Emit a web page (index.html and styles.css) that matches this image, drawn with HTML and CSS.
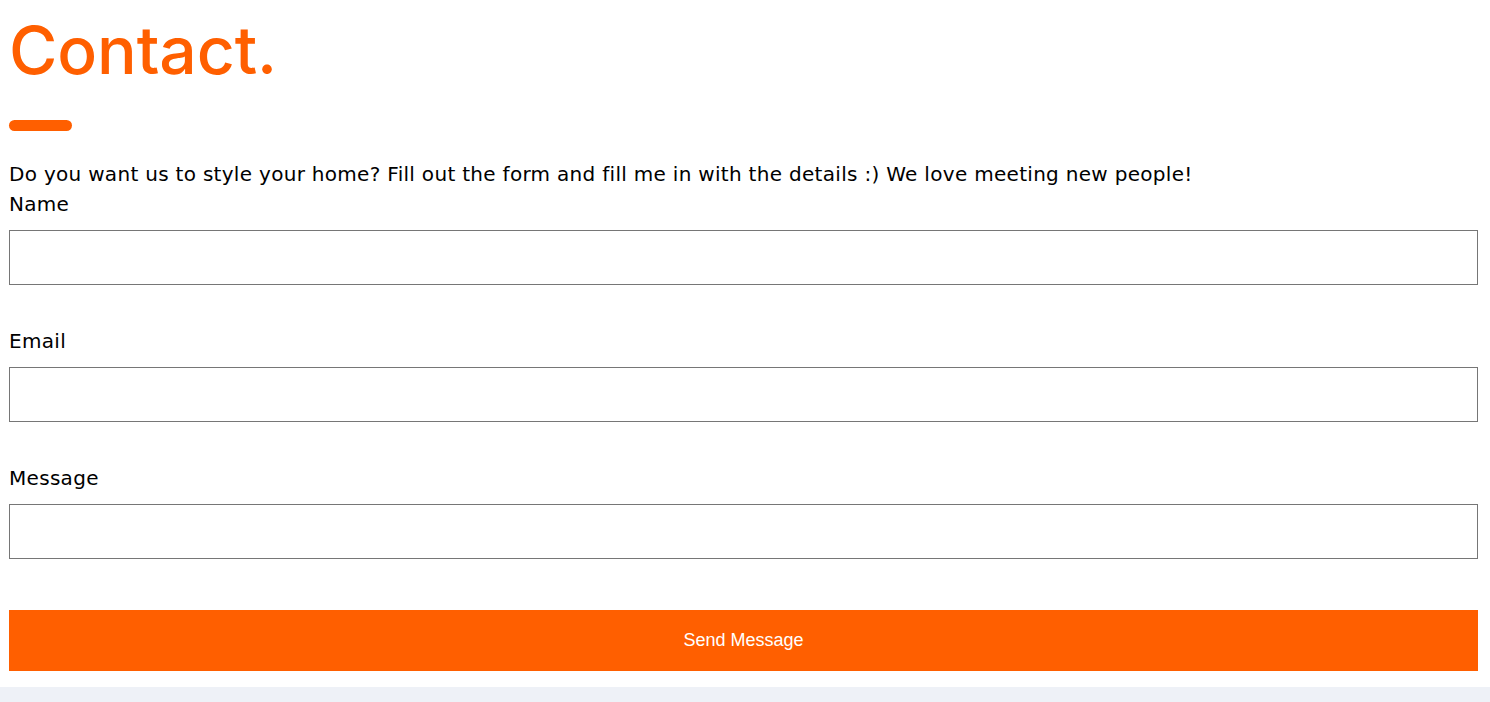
FILE: index.html
```html
<!DOCTYPE html>
<html lang="en">
<head>
<meta charset="utf-8">
<title>Contact</title>
<link rel="stylesheet" href="styles.css">
</head>
<body>
<main class="contact">
  <h1 class="contact__title">Contact.</h1>
  <div class="contact__bar"></div>
  <p class="contact__intro">Do you want us to style your home? Fill out the form and fill me in with the details :) We love meeting new people!</p>
  <form class="contact__form">
    <label class="field">
      <span class="field__label">Name</span>
      <input class="field__input" type="text">
    </label>
    <label class="field">
      <span class="field__label">Email</span>
      <input class="field__input" type="email">
    </label>
    <label class="field">
      <span class="field__label">Message</span>
      <input class="field__input" type="text">
    </label>
    <button class="contact__submit" type="button">Send Message</button>
  </form>
</main>
<footer class="footer"></footer>
</body>
</html>
```
FILE: styles.css
```css
* { box-sizing: border-box; }
html, body { margin: 0; padding: 0; background: #fff; }
body {
  font-family: "DejaVu Sans", "Noto Sans", sans-serif;
  color: #000;
}
.contact {
  padding: 0 12px 16px 9px;
}
.contact__title {
  margin: 0;
  padding-top: 14px;
  font-family: Inter, "DejaVu Sans", sans-serif;
  font-size: 66px;
  line-height: 72px;
  font-weight: 500;
  color: #ff5f00;
  letter-spacing: -0.1px;
}
.contact__bar {
  width: 63px;
  height: 11px;
  border-radius: 6px;
  background: #ff5f00;
  margin-top: 34px;
}
.contact__intro {
  margin: 28px 0 0;
  font-size: 20px;
  line-height: 30px;
  letter-spacing: 0.3px;
}
.contact__form {
  display: flex;
  flex-direction: column;
}
.field {
  display: flex;
  flex-direction: column;
  margin-bottom: 41px;
}
.field__label {
  font-size: 20px;
  line-height: 30px;
  letter-spacing: 0.3px;
  margin-bottom: 11px;
}
.field__input {
  height: 55px;
  border: 1px solid #767676;
  border-radius: 0;
  font: inherit;
  padding: 0 10px;
}
.contact__submit {
  height: 61px;
  margin-top: 10px;
  border: none;
  background: #ff5f00;
  color: #fff;
  font-family: "Liberation Sans", Arial, sans-serif;
  font-size: 18px;
  padding-bottom: 2px;
}
.footer {
  height: 40px;
  background: #eef1f7;
}
```
